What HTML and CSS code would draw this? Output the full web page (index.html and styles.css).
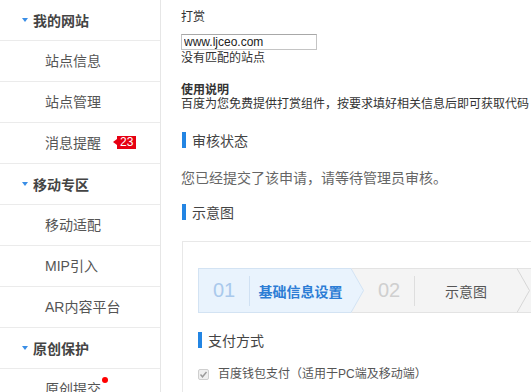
FILE: index.html
```
<!DOCTYPE html>
<html lang="zh-CN">
<head>
  <meta charset="UTF-8">
  <title>打赏 - 站长工具</title>
  <link rel="stylesheet" href="styles.css">
</head>
<body>
  <div class="page">
    <aside class="sidebar">
      <div class="nav-group"><span class="caret"></span>我的网站</div>
      <div class="nav-item"><span>站点信息</span></div>
      <div class="nav-item"><span>站点管理</span></div>
      <div class="nav-item"><span>消息提醒</span><span class="badge">23</span></div>
      <div class="nav-group"><span class="caret"></span>移动专区</div>
      <div class="nav-item"><span>移动适配</span></div>
      <div class="nav-item"><span>MIP引入</span></div>
      <div class="nav-item"><span>AR内容平台</span></div>
      <div class="nav-group"><span class="caret"></span>原创保护</div>
      <div class="nav-item"><span class="has-dot">原创提交</span></div>
    </aside>

    <main class="main">
      <div class="field-label">打赏</div>
      <input class="site-input" type="text" value="www.ljceo.com">
      <div class="hint">没有匹配的站点</div>

      <div class="usage-title">使用说明</div>
      <div class="usage-text">百度为您免费提供打赏组件，按要求填好相关信息后即可获取代码</div>

      <h4 class="section-title status-title">审核状态</h4>
      <p class="status-text">您已经提交了该申请，请等待管理员审核。</p>

      <h4 class="section-title preview-title">示意图</h4>
      <div class="preview">
        <div class="steps">
          <div class="step step-active">
            <span class="step-num">01</span>
            <span class="step-sep"></span>
            <span class="step-label">基础信息设置</span>
          </div>
          <svg class="chevron" width="13" height="45" viewBox="0 0 13 45">
            <rect x="0" y="0" width="13" height="45" fill="#f4f4f4"/>
            <line x1="0" y1="0.5" x2="13" y2="0.5" stroke="#e3e3e3"/>
            <line x1="0" y1="44.5" x2="13" y2="44.5" stroke="#e3e3e3"/>
            <polygon points="0,0 13,22.5 0,45" fill="#e9f3fd"/>
            <polyline points="0,0.5 12.5,22.5 0,44.5" fill="none" stroke="#d3e3f3"/>
          </svg>
          <div class="step">
            <span class="step-num">02</span>
            <span class="step-sep"></span>
            <span class="step-label">示意图</span>
          </div>
          <svg class="chevron" width="13" height="45" viewBox="0 0 13 45">
            <rect x="0" y="0" width="13" height="45" fill="#f4f4f4"/>
            <line x1="0" y1="0.5" x2="13" y2="0.5" stroke="#e3e3e3"/>
            <line x1="0" y1="44.5" x2="13" y2="44.5" stroke="#e3e3e3"/>
            <polyline points="0,0.5 12.5,22.5 0,44.5" fill="none" stroke="#d6d6d6"/>
          </svg>
          <div class="step">
            <span class="step-num">03</span>
            <span class="step-sep"></span>
            <span class="step-label">获取代码</span>
          </div>
        </div>

        <h4 class="section-title pay-title">支付方式</h4>
        <label class="pay-option">
          <span class="fake-check">
            <svg width="9" height="9" viewBox="0 0 9 9"><polyline points="1.5,4.5 3.5,6.8 7.5,2" fill="none" stroke="#9a9a9a" stroke-width="1.4"/></svg>
          </span>
          百度钱包支付（适用于PC端及移动端）
        </label>
      </div>
    </main>
  </div>
</body>
</html>
```

FILE: styles.css
```
:root {
  --blue: #2385e3;
  --border: #e6e6e6;
  --text: #333;
  --muted: #555;
}

html, body {
  margin: 0;
  height: 100%;
  overflow: hidden;
}

body {
  font-family: 'Liberation Sans', 'Noto Sans CJK SC', sans-serif;
  color: var(--text);
  background: #fff;
}

.page {
  display: flex;
  width: 900px;
  min-height: 100%;
}

/* Sidebar */
.sidebar {
  width: 160px;
  flex: none;
  border-right: 1px solid var(--border);
  font-size: 14px;
}

.nav-group,
.nav-item {
  display: flex;
  align-items: center;
  height: 40px;
  border-bottom: 1px solid #ebebeb;
}

.nav-group {
  padding-left: 22px;
  font-weight: bold;
  color: #444;
}

.caret {
  width: 0;
  height: 0;
  border-left: 3.5px solid transparent;
  border-right: 3.5px solid transparent;
  border-top: 4px solid #3a8ee6;
  margin-right: 5px;
}

.nav-item {
  padding-left: 45px;
  color: var(--muted);
}

.nav-item span {
  line-height: 14px;
}

.badge {
  position: relative;
  margin-left: 16px;
  margin-top: -2px;
  padding: 0 3px;
  background: #e60012;
  color: #fff;
  font-size: 12px;
  font-family: 'Liberation Sans', sans-serif;
  line-height: 13px !important;
}

.badge::before {
  content: '';
  position: absolute;
  left: -4px;
  top: 3px;
  border-top: 3.5px solid transparent;
  border-bottom: 3.5px solid transparent;
  border-right: 4px solid #e60012;
}

.has-dot {
  position: relative;
}

.has-dot::after {
  content: '';
  position: absolute;
  right: -7px;
  top: -5px;
  width: 6px;
  height: 6px;
  border-radius: 50%;
  background: #f00;
}

/* Main */
.main {
  flex: 1;
  padding-left: 20px;
  font-size: 12px;
}

.field-label {
  margin-top: 10px;
  line-height: 14px;
}

.site-input {
  display: block;
  box-sizing: border-box;
  margin: 10px 0 0;
  width: 136px;
  height: 16px;
  padding: 0 2px;
  border: 1px solid #c4c4c4;
  border-top-color: #a8a8a8;
  font-family: 'Liberation Sans', sans-serif;
  font-size: 12px;
  color: #222;
}

.hint {
  line-height: 16px;
}

.usage-title {
  margin-top: 17px;
  line-height: 14px;
  font-weight: bold;
}

.usage-text {
  line-height: 14px;
}

.section-title {
  display: flex;
  align-items: center;
  height: 16px;
  margin: 0;
  font-size: 14px;
  font-weight: normal;
  color: #444;
}

.section-title::before {
  content: '';
  width: 4px;
  height: 16px;
  margin-left: 1px;
  margin-right: 6px;
  background: var(--blue);
}

.status-title {
  margin-top: 21px;
}

.status-text {
  margin: 20px 0 0;
  font-size: 14px;
  line-height: 20px;
  color: #666;
}

.preview-title {
  margin-top: 16px;
}

.preview {
  margin-top: 21px;
  margin-left: 1px;
  width: 600px;
  padding: 26px 0 30px 15px;
  border: 1px solid #e8e8e8;
}

/* Steps */
.steps {
  display: flex;
  height: 45px;
}

.step {
  display: flex;
  align-items: center;
  box-sizing: border-box;
  width: 153px;
  height: 45px;
  background: #f4f4f4;
  border-top: 1px solid #e3e3e3;
  border-bottom: 1px solid #e3e3e3;
}

.step-active {
  background: #e9f3fd;
  border: 1px solid #d3e3f3;
  border-right: none;
}

.step-num {
  width: 50px;
  text-align: center;
  font-size: 20px;
  font-family: 'Liberation Sans', sans-serif;
  color: #cfcfcf;
}

.step-active .step-num {
  color: #a9c9ec;
}

.step-sep {
  width: 1px;
  height: 30px;
  background: #dedede;
}

.step-active .step-sep {
  background: #d0e1f3;
}

.step-label {
  flex: 1;
  text-align: center;
  font-size: 14px;
  color: var(--muted);
}

.step-active .step-label {
  font-weight: bold;
  color: #2c7dd5;
}

.chevron {
  display: block;
  flex: none;
}

.pay-title {
  margin-top: 19px;
}

.pay-title::before {
  margin-left: 0;
}

.pay-option {
  display: flex;
  align-items: center;
  margin-top: 16px;
  line-height: 20px;
  color: var(--muted);
}

.fake-check {
  display: flex;
  align-items: center;
  justify-content: center;
  box-sizing: border-box;
  width: 11px;
  height: 11px;
  margin-right: 9px;
  border: 1px solid #cfcfcf;
  border-radius: 2px;
  background: #efefef;
}
```
